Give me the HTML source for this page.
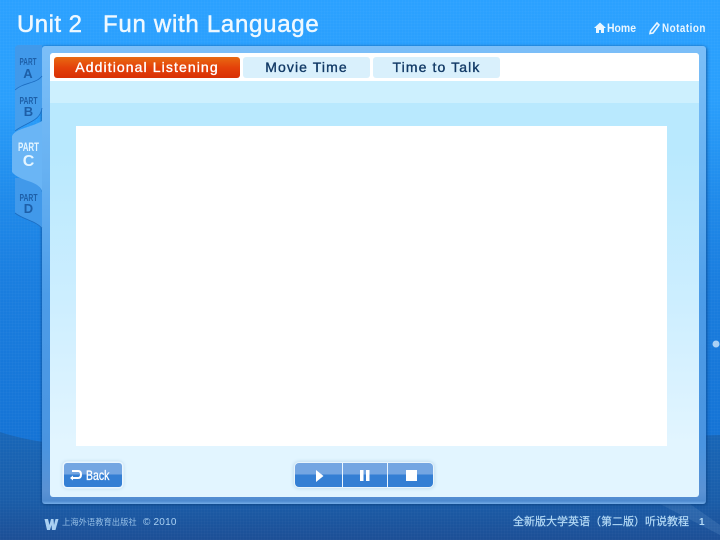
<!DOCTYPE html>
<html><head><meta charset="utf-8"><style>
html,body{margin:0;padding:0;width:720px;height:540px;overflow:hidden}
#s{position:relative;width:720px;height:540px;overflow:hidden;font-family:"Liberation Sans","Noto Sans CJK SC",sans-serif;
background:linear-gradient(180deg,#2ba1ff 0,#2a9ffc 100px,#1f8aea 200px,#1a7edf 280px,#1574d6 430px,#1570d0 540px)}
#s>*{position:absolute}
.grid{left:0;top:0;width:720px;height:540px;background:repeating-linear-gradient(90deg,rgba(255,255,255,.018) 0 1px,transparent 1px 3px),repeating-linear-gradient(0deg,rgba(255,255,255,.018) 0 1px,transparent 1px 3px)}
.frame{left:42px;top:46px;width:664px;height:458px;background:linear-gradient(180deg,#7cbff8 0,#68b2f2 120px,#4c9ce8 250px,#4a94e0 400px,#5a92d4 445px,#4f8bd0 455px,#74ade8 458px);border-radius:3px;box-shadow:1px 1px 3px rgba(10,60,120,.6),-1px 0 2px rgba(10,60,120,.35)}
.panel{left:50px;top:53px;width:649px;height:444px;background:linear-gradient(180deg,#b9e9fe 0,#b9e9fe 100px,#cdeeff 250px,#e2f5ff 390px,#e2f5ff 444px);border-radius:3px}
.top{left:50px;top:53px;width:649px;height:28px;background:#fff;border-radius:3px 3px 0 0}
.band{left:50px;top:81px;width:649px;height:22px;background:#cdf0fe}
.white{left:76px;top:126px;width:591px;height:320px;background:#fff}
.tab{top:57px;height:21px;line-height:21px;text-align:center;font-size:14px;letter-spacing:1.1px;border-radius:3px;background:#d9f0fc;color:#123a66;-webkit-text-stroke:.35px #123a66}
.t1{left:54px;width:186px;background:linear-gradient(180deg,#e86a12,#e4420a 50%,#d83006);color:#fff;-webkit-text-stroke:.35px #fff}
.title{top:11px;font-size:24px;line-height:28px;color:#eef8ff;white-space:pre;-webkit-text-stroke:.45px #eef8ff}
.nav{top:21px;font-size:12px;line-height:14px;font-weight:bold;color:#eaf6ff;transform-origin:left top;white-space:pre}
.btn{background:linear-gradient(180deg,#74a6e2 0,#74a6e2 48%,#347fd4 48%,#347fd4 100%)}
.foot{color:#a9d0f2}
</style></head><body><div id="s">
<svg style="left:0;top:0" width="720" height="540">
<defs><linearGradient id="d" x1="0" y1="0" x2="0" y2="1"><stop offset="0" stop-color="#1866b8"/><stop offset=".6" stop-color="#1a5eaa"/><stop offset="1" stop-color="#1c4f96"/></linearGradient></defs>
<path d="M0 432 Q60 452 200 450 L720 435 L720 540 L0 540Z" fill="url(#d)"/>
<circle cx="716" cy="344" r="3.500" fill="#a8d0f5"/>
<path d="M660 504 L720 535 L720 525 L690 504Z" fill="#4d80bd" opacity=".35"/>
</svg>
<div class="grid"></div>
<div class="title" style="left:17px;letter-spacing:.45px">Unit 2</div>
<div class="title" style="left:103px;letter-spacing:.72px">Fun with Language</div>
<svg style="left:593px;top:21px" width="14" height="14" viewBox="0 0 14 14"><path d="M1 7 L7 1.500 L13 7 L11 7 L11 12 L8 12 L8 9 L6 9 L6 12 L3 12 L3 7Z" fill="#eaf6ff"/></svg>
<div class="nav" style="left:607px;transform:scaleX(.87)">Home</div>
<svg style="left:648px;top:21px" width="13" height="14" viewBox="0 0 13 14"><path d="M9 2 L11 4 L5 12 L2 12.500 L2.500 10Z" fill="none" stroke="#eaf6ff" stroke-width="1.600"/></svg>
<div class="nav" style="left:662px;letter-spacing:.6px;transform:scaleX(.82)">Notation</div>

<div class="frame"></div>
<div class="panel"></div>
<div class="top"></div>
<div class="band"></div>
<div class="white"></div>
<div class="tab t1">Additional Listening</div>
<div class="tab" style="left:243px;width:127px">Movie Time</div>
<div class="tab" style="left:373px;width:127px">Time to Talk</div>

<svg style="left:10px;top:42px" width="34" height="192" viewBox="10 42 34 192">
<path d="M15 49 Q15 45 19 45 L42 45 L42 76 C36 84 24 82 15 90Z" fill="#4199ea"/>
<path d="M15 90 C24 82 36 84 42 76 L42 108 C40 122 26 122 15 131Z" fill="#469eec"/>
<path d="M15 178 C26 178 38 180 42 192 L42 228 C34 220 24 220 15 213Z" fill="#4199ea"/>
<path d="M15 90 C24 82 36 84 42 76 M42 108 C40 122 26 122 15 131 M42 228 C34 220 24 220 15 213" fill="none" stroke="#1c6cc0" stroke-width=".8"/>
<path d="M12 136 C16 128 30 128 42 121 L42 191 C38 180 20 182 12 172Z" fill="#6ab5f5"/>
<g font-family="Liberation Sans,sans-serif" font-weight="bold" text-anchor="middle">
<text x="28" y="65" font-size="10" textLength="17" lengthAdjust="spacingAndGlyphs" fill="#1d5fa8">PART</text>
<text x="28" y="78" font-size="13" fill="#1d5fa8">A</text>
<text x="28.500" y="104" font-size="10" textLength="18" lengthAdjust="spacingAndGlyphs" fill="#1d5fa8">PART</text>
<text x="28.500" y="116" font-size="13" fill="#1d5fa8">B</text>
<text x="28.500" y="151" font-size="12" textLength="21" lengthAdjust="spacingAndGlyphs" fill="#e4f5ff">PART</text>
<text x="28.500" y="166" font-size="16" fill="#e4f5ff">C</text>
<text x="28.500" y="201" font-size="10" textLength="18" lengthAdjust="spacingAndGlyphs" fill="#1d5fa8">PART</text>
<text x="28.500" y="213" font-size="13" fill="#1d5fa8">D</text>
</g></svg>

<div class="btn" style="left:64px;top:463px;width:58px;height:24px;border-radius:3px;box-shadow:0 0 0 1.500px #eaf6ff,0 0 3px 2px #c4dff0"></div>
<svg style="left:68px;top:468px" width="16" height="14" viewBox="0 0 16 14"><path d="M4 3 L10 3 Q13 3 13 6.500 Q13 10 10 10 L3 10" fill="none" stroke="#fff" stroke-width="2"/><path d="M5 7.500 L2 10 L5 12.500Z" fill="#fff"/></svg>
<div style="left:86px;top:468px;font-size:14px;line-height:15px;color:#fff;transform-origin:left top;transform:scaleX(.75);-webkit-text-stroke:.3px #fff">Back</div>

<div style="left:295px;top:463px;width:138px;height:24px;border-radius:4px;box-shadow:0 0 0 1px #e8f4fc,0 0 3px 2px #c4dff0;overflow:hidden" class="btn"></div>
<div style="left:342px;top:463px;width:1px;height:24px;background:#eaf6ff"></div>
<div style="left:387px;top:463px;width:1px;height:24px;background:#eaf6ff"></div>
<svg style="left:295px;top:463px" width="138" height="24"><path d="M21 7 L28.500 13 L21 19Z" fill="#fff"/><rect x="65" y="7" width="3.500" height="11" fill="#fff"/><rect x="71" y="7" width="3.500" height="11" fill="#fff"/><rect x="111" y="7" width="11" height="11" fill="#fff"/></svg>

<svg style="left:44px;top:518px" width="15" height="13" viewBox="0 0 15 13"><path d="M0.500 1 L4 1 L5.500 7 L7 1 L9.500 1 L10 7 L11.500 1 L14.500 1 L11.500 12 L8 12 L7.500 7 L6 12 L3 12Z" fill="#a9d0f2"/></svg>
<div class="foot" style="left:62px;top:516px;font-size:8.300px;line-height:13px;white-space:pre;opacity:.85">上海外语教育出版社</div>
<div class="foot" style="left:143px;top:516px;font-size:10px;line-height:13px;white-space:pre;letter-spacing:.2px">© 2010</div>
<div class="foot" style="left:513px;top:515px;font-size:11px;line-height:15px;white-space:pre;color:#b4daf6;-webkit-text-stroke:.2px #b4daf6">全新版大学英语（第二版）听说教程</div>
<div class="foot" style="left:699px;top:515px;font-size:10px;line-height:15px;font-weight:bold;color:#b4daf6">1</div>
</div></body></html>
